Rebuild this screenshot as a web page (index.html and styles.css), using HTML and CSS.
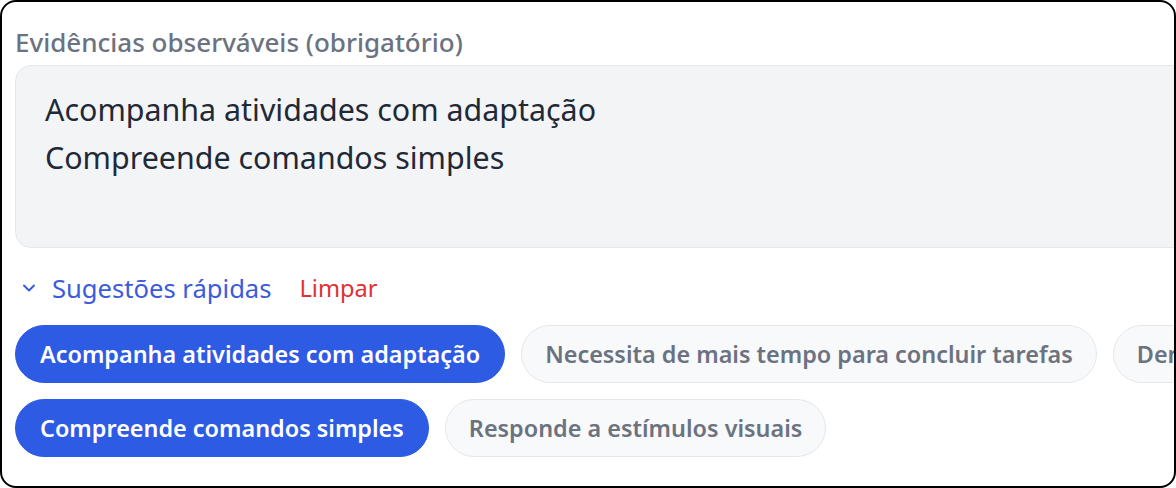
FILE: index.html
```html
<!DOCTYPE html>
<html lang="pt">
<head>
<meta charset="utf-8">
<link rel="stylesheet" href="styles.css">
</head>
<body>
<div class="frame">
  <div class="field">
    <div class="label">Evidências observáveis (obrigatório)</div>
    <div class="textarea">
      <div>Acompanha atividades com adaptação</div>
      <div>Compreende comandos simples</div>
    </div>
    <div class="suggest-bar">
      <span class="toggle">
        <svg class="chev" width="14" height="10" viewBox="0 0 14 10"><path d="M2 2.5 L7 7.5 L12 2.5" fill="none" stroke="#3b5bdb" stroke-width="2" stroke-linecap="round" stroke-linejoin="round"/></svg>
        Sugestões rápidas
      </span>
      <span class="clear">Limpar</span>
    </div>
    <div class="chips">
      <span class="chip on">Acompanha atividades com adaptação</span>
      <span class="chip">Necessita de mais tempo para concluir tarefas</span>
      <span class="chip">Demonstra interesse</span>
    </div>
    <div class="chips">
      <span class="chip on">Compreende comandos simples</span>
      <span class="chip">Responde a estímulos visuais</span>
    </div>
  </div>
</div>
</body>
</html>
```
FILE: styles.css
```css
html, body { margin: 0; padding: 0; background: #ffffff; }
.frame {
  box-sizing: border-box;
  width: 1176px;
  height: 488px;
  border: 2px solid #000;
  border-radius: 16px;
  overflow: hidden;
  background: #fff;
  font-family: "Noto Sans", "Open Sans", sans-serif;
}
.field { padding: 26px 0 0 13px; width: 1400px; }
.label {
  font-size: 26px;
  font-weight: 500;
  color: #6b7280;
  line-height: 28px;
}
.textarea {
  margin-top: 9px;
  box-sizing: border-box;
  width: 1240px;
  height: 183px;
  background: #f3f4f6;
  border: 1px solid #e5e7eb;
  border-radius: 16px;
  padding: 20px 29px;
  font-size: 30.4px;
  line-height: 48px;
  color: #1f2937;
}
.suggest-bar {
  display: flex;
  align-items: center;
  gap: 28px;
  margin-top: 24px;
  height: 32px;
}
.toggle {
  display: flex;
  align-items: center;
  gap: 16px;
  padding-left: 7px;
  color: #3b5bdb;
  font-size: 25.6px;
}
.clear { color: #e03131; font-size: 23.6px; }
.chips {
  display: flex;
  gap: 16px;
  margin-top: 21px;
  white-space: nowrap;
}
.chips + .chips { margin-top: 16px; }
.chip {
  box-sizing: border-box;
  height: 58px;
  display: inline-flex;
  align-items: center;
  padding: 0 24px;
  border-radius: 29px;
  border: 1px solid #e5e7eb;
  background: #f8f9fa;
  color: #6b7280;
  font-size: 23.4px;
  font-weight: 600;
}
.chip + .chip:not(.on) { padding: 0 23px; }
.chip.on {
  background: #2d5be3;
  border-color: #2d5be3;
  color: #ffffff;
}
```
